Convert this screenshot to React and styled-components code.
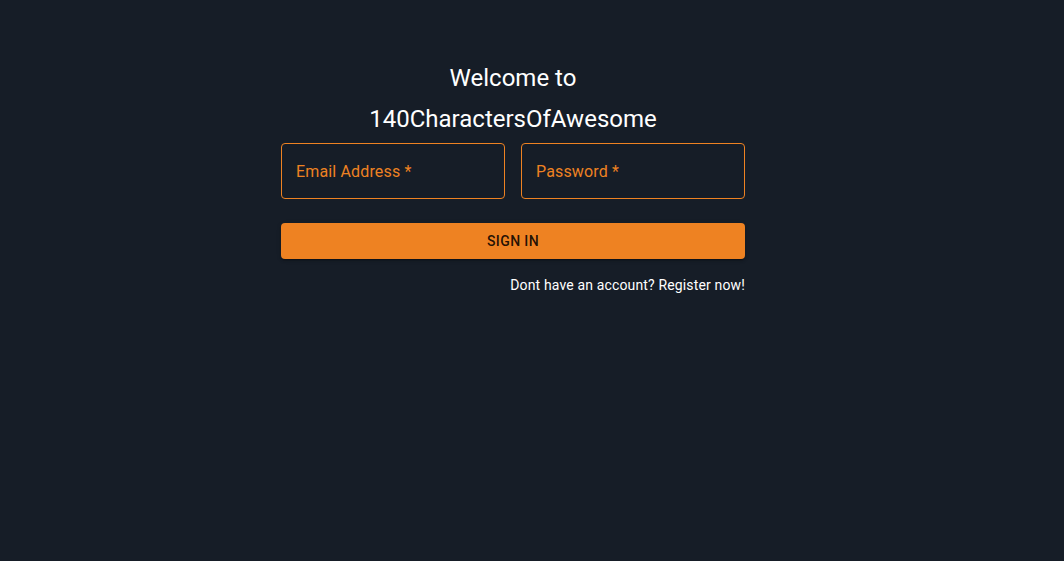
import React from "react";
import styled, { createGlobalStyle } from "styled-components";

const Global = createGlobalStyle`
  html, body { margin: 0; padding: 0; background: #161d27; }
  body { font-family: Roboto, "Liberation Sans", sans-serif; color: #fff; }
  * { box-sizing: border-box; }
`;

const Page = styled.div`
  min-height: 561px;
  display: flex;
  justify-content: center;
  padding: 58px 38px 0 0;
`;

const Form = styled.form`
  width: 464px;
  display: flex;
  flex-direction: column;
`;

const Title = styled.h1`
  margin: 0 0 3px;
  font-size: 24px;
  font-weight: 400;
  line-height: 41px;
  text-align: center;
  color: #fff;
`;

const Row = styled.div`
  display: flex;
  gap: 16px;
`;

const Field = styled.label`
  flex: 1;
  height: 56px;
  border: 1px solid #ee8222;
  border-radius: 4px;
  display: flex;
  align-items: center;
  padding: 0 14px;
  font-size: 16px;
  color: #ee8222;
  letter-spacing: 0.15px;
`;

const Button = styled.button`
  margin-top: 24px;
  height: 36px;
  border: none;
  border-radius: 4px;
  background: #ee8222;
  color: rgba(0, 0, 0, 0.87);
  font-family: Roboto, "Liberation Sans", sans-serif;
  font-size: 14px;
  font-weight: 500;
  letter-spacing: 0.4px;
  text-transform: uppercase;
  box-shadow: 0 3px 1px -2px rgba(0,0,0,0.2), 0 2px 2px 0 rgba(0,0,0,0.14), 0 1px 5px 0 rgba(0,0,0,0.12);
  cursor: pointer;
`;

const LinkRow = styled.div`
  margin-top: 16px;
  display: flex;
  justify-content: flex-end;
`;

const Link = styled.a`
  font-size: 14px;
  line-height: 20px;
  color: #fff;
  text-decoration: none;
  letter-spacing: 0.15px;
`;

export default function App() {
  return (
    <>
      <Global />
      <Page>
        <Form onSubmit={(e) => e.preventDefault()}>
          <Title>
            Welcome to
            <br />
            140CharactersOfAwesome
          </Title>
          <Row>
            <Field>Email Address *</Field>
            <Field>Password *</Field>
          </Row>
          <Button type="submit">Sign In</Button>
          <LinkRow>
            <Link href="#">Dont have an account? Register now!</Link>
          </LinkRow>
        </Form>
      </Page>
    </>
  );
}
